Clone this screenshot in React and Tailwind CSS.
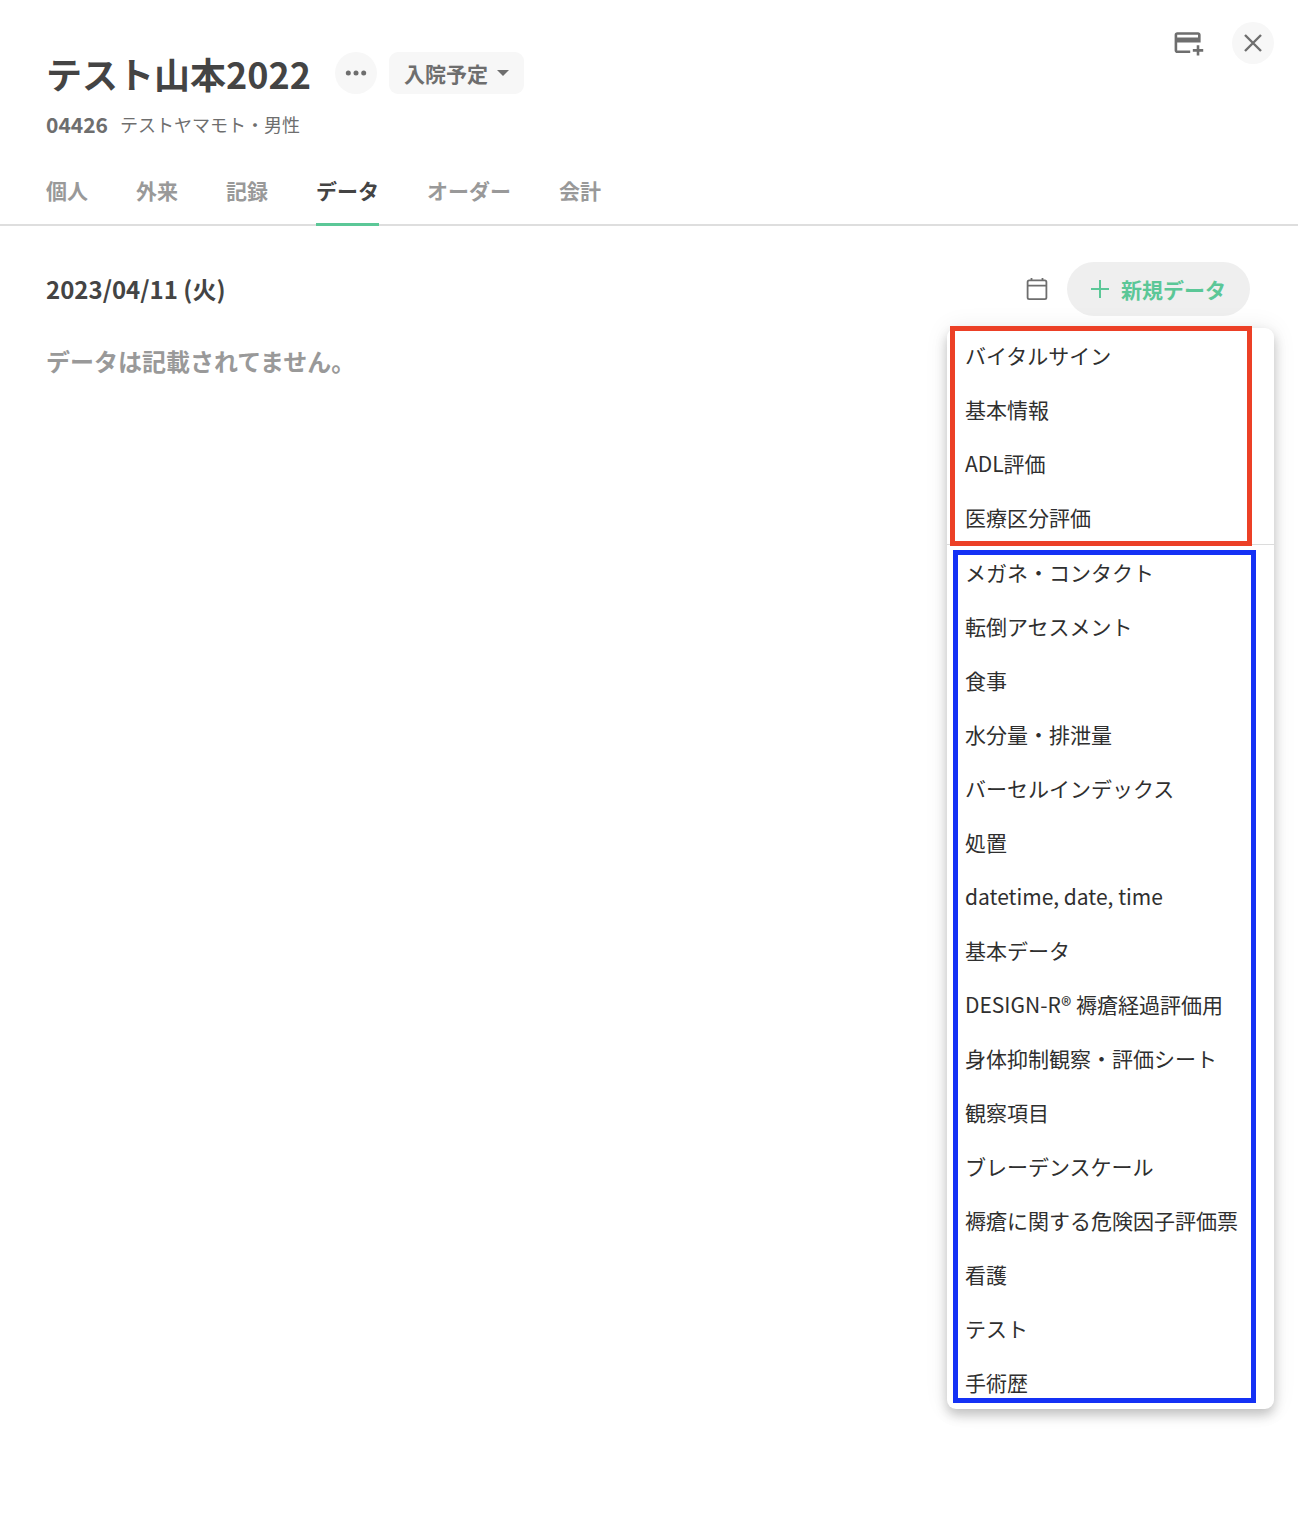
import { useState } from 'react'

const tabs = ['個人', '外来', '記録', 'データ', 'オーダー', '会計']

const standardItems = ['バイタルサイン', '基本情報', 'ADL評価', '医療区分評価']

const customItems = [
  'メガネ・コンタクト',
  '転倒アセスメント',
  '食事',
  '水分量・排泄量',
  'バーセルインデックス',
  '処置',
  'datetime, date, time',
  '基本データ',
  'DESIGN-R® 褥瘡経過評価用',
  '身体抑制観察・評価シート',
  '観察項目',
  'ブレーデンスケール',
  '褥瘡に関する危険因子評価票',
  '看護',
  'テスト',
  '手術歴'
]

const AddCardIcon = () => (
  <svg className="size-8" viewBox="0 0 24.6 24.6" fill="currentColor" aria-hidden="true">
    <path d="M20 4H4c-1.11 0-1.99.89-1.99 2L2 18c0 1.11.89 2 2 2h10v-2H4v-6h18V6c0-1.11-.89-2-2-2zm0 4H4V6h16v2zm4 9v2h-3v3h-2v-3h-3v-2h3v-3h2v3h3z" />
  </svg>
)

const CloseIcon = () => (
  <svg className="size-6" viewBox="0 0 24 24" fill="none" stroke="currentColor" strokeWidth="2.4" aria-hidden="true">
    <path d="M4 4l16 16M20 4L4 20" />
  </svg>
)

const MoreIcon = () => (
  <svg className="size-6" viewBox="0 0 24 24" fill="currentColor" aria-hidden="true">
    <circle cx="4.3" cy="12" r="2.5" />
    <circle cx="12" cy="12" r="2.5" />
    <circle cx="19.7" cy="12" r="2.5" />
  </svg>
)

const CalendarIcon = () => (
  <svg className="size-6" viewBox="0 0 24 24" fill="none" stroke="currentColor" strokeWidth="1.8" aria-hidden="true">
    <rect x="2.6" y="3.4" width="18.8" height="18.8" rx="1.6" />
    <path d="M2.6 8.6h18.8M6.5 3.4V1M17.5 3.4V1" />
  </svg>
)

const PlusIcon = () => (
  <svg className="size-[18px]" viewBox="0 0 18 18" stroke="currentColor" strokeWidth="2" aria-hidden="true">
    <path d="M9 0v18M0 9h18" />
  </svg>
)

const MenuItem = ({ label }) => (
  <li>
    <button type="button" className="block h-[54px] w-full px-[18px] pt-0.5 text-left text-[21px] whitespace-nowrap">
      {label}
    </button>
  </li>
)

const DataMenu = () => (
  <div className="absolute top-[66px] -right-6 w-[327px] rounded-[9px] bg-white text-[#2f2f2f] shadow-[0_6px_12px_rgba(0,0,0,0.22),0_0_24px_rgba(0,0,0,0.08)]">
    <ul className="relative z-10">
      {standardItems.map((item) => <MenuItem key={item} label={item} />)}
      <li aria-hidden="true" className="pointer-events-none absolute -top-0.5 right-[22px] -bottom-0.5 left-[3px] border-5 border-[#ec4026]" />
    </ul>
    <ul className="relative border-t border-[#dcdcdc]">
      {customItems.map((item) => <MenuItem key={item} label={item} />)}
      <li aria-hidden="true" className="pointer-events-none absolute top-[5px] right-[18px] bottom-[6px] left-[6px] border-5 border-[#1431f5]" />
    </ul>
  </div>
)

const Header = ({ activeTab, setActiveTab }) => (
  <header className="border-b-2 border-[#dedede]">
    <div className="flex items-start justify-between pl-[46px] pr-6">
      <div className="pt-[52px]">
        <div className="flex items-center">
          <h1 className="text-4xl/[42px] font-bold text-[#444]">テスト山本2022</h1>
          <button type="button" aria-label="その他" className="ml-6 flex size-[42px] items-center justify-center rounded-full bg-[#f7f7f7]">
            <MoreIcon />
          </button>
          <div className="relative ml-3">
            <select aria-label="ステータス" className="h-[42px] w-[135px] appearance-none rounded-[9px] bg-[#f7f7f7] pt-0.5 pl-[15px] text-[21px] font-bold">
              <option>入院予定</option>
            </select>
            <svg className="pointer-events-none absolute top-[18px] right-[15px] h-1.5 w-3" viewBox="0 0 12 6" fill="currentColor" aria-hidden="true">
              <path d="M0 0h12L6 6z" />
            </svg>
          </div>
        </div>
        <p className="mt-[15px] flex items-center gap-3 leading-[30px]">
          <span className="text-[21px] font-bold">04426</span>
          <span className="text-lg/[30px]">テストヤマモト・男性</span>
        </p>
      </div>
      <div className="flex items-center gap-7 pt-[22px]">
        <button type="button" aria-label="カードを追加"><AddCardIcon /></button>
        <button type="button" aria-label="閉じる" className="flex size-[42px] items-center justify-center rounded-full bg-[#f7f7f7]">
          <CloseIcon />
        </button>
      </div>
    </div>
    <nav className="mt-[25px] -mb-0.5 flex gap-12 px-[46px]">
      {tabs.map((tab) => (
        <button
          key={tab}
          type="button"
          onClick={() => setActiveTab(tab)}
          className={`h-[62px] border-b-3 pb-1.5 text-[21px] font-bold ${tab === activeTab ? 'border-[#5bc797] text-[#444]' : 'border-transparent text-[#999]'}`}
        >
          {tab}
        </button>
      ))}
    </nav>
  </header>
)

const App = () => {
  const [activeTab, setActiveTab] = useState('データ')
  const [menuOpen, setMenuOpen] = useState(true)

  return (
    <div className="min-h-screen bg-white font-['Noto_Sans_CJK_JP',sans-serif] text-[#6e6e6e]">
      <Header activeTab={activeTab} setActiveTab={setActiveTab} />
      <main className="pt-9 pr-12 pl-[46px]">
        <div className="flex items-center justify-between">
          <h2 className="text-2xl font-bold text-[#444]">2023/04/11 (火)</h2>
          <div className="flex items-center gap-[18px]">
            <button type="button" aria-label="日付を選択"><CalendarIcon /></button>
            <div className="relative">
              <button
                type="button"
                onClick={() => setMenuOpen(!menuOpen)}
                className="flex h-[54px] items-center gap-3 rounded-full bg-[#efefef] px-6 text-[21px] font-bold text-[#5bc797]"
              >
                <PlusIcon />
                <span className="pt-0.5">新規データ</span>
              </button>
              {menuOpen && <DataMenu />}
            </div>
          </div>
        </div>
        <p className="mt-[29px] text-2xl font-bold text-[#999]">データは記載されてません。</p>
      </main>
    </div>
  )
}

export default App
